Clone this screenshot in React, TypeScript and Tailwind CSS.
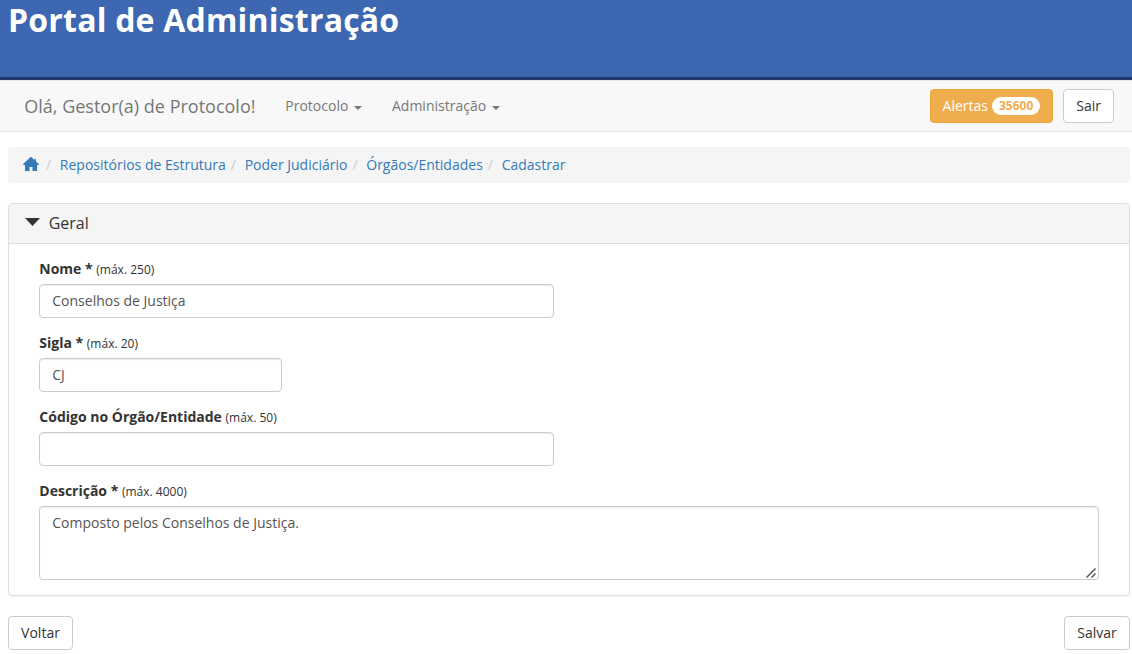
import React from "react";

const crumbs = ["Repositórios de Estrutura", "Poder Judiciário", "Órgãos/Entidades", "Cadastrar"];

const control =
  "block rounded border border-[#ccc] bg-white px-[12.3px] text-[14px] leading-5 text-[#555] outline-none shadow-[inset_0_1px_1px_rgba(0,0,0,0.075)]";
const input = "h-[34px] pt-[5px] pb-[7px]";
const button =
  "h-[34px] shrink-0 rounded border border-[#ccc] bg-white text-[14px] leading-5 text-[#333]";

function Caret() {
  return (
    <svg width="8" height="4" viewBox="0 0 8 4" className="mt-[3px] ml-[5.5px]" fill="currentColor">
      <path d="M0 0h8L4 4z" />
    </svg>
  );
}

function Label({ text, max }: { text: string; max: number }) {
  return (
    <label className="mb-[5px] block h-5 pl-[0.3px] text-[14px] leading-5 whitespace-nowrap">
      <span className="font-bold">{text}</span> <span className="text-[12px]">(máx. {max})</span>
    </label>
  );
}

export default function App() {
  return (
    <div className="h-[654px] w-full overflow-hidden bg-white font-['Open_Sans','Noto_Sans',sans-serif] text-[14px] leading-5 text-[#333]">
      <header className="h-20 border-b-[3px] border-[#20386d] bg-[#3d67b1] pl-2">
        <h1 className="text-[32px] leading-[40px] font-bold tracking-[0.2px] text-white">Portal de Administração</h1>
      </header>
      <nav className="flex h-[52px] items-center border-y border-[#e7e7e7] bg-[#f8f8f8] pr-[18px] pl-[24.3px] text-[#777]">
        <span className="w-[261px] text-[18px] whitespace-nowrap">Olá, Gestor(a) de Protocolo!</span>
        <a className="flex w-[106.7px] items-center whitespace-nowrap">Protocolo<Caret /></a>
        <a className="flex items-center whitespace-nowrap">Administração<Caret /></a>
        <button className="ml-auto flex h-[34px] items-center rounded border border-[#eea236] bg-[#f0ad4e] px-3 text-white">
          Alertas
          <span className="ml-1 flex h-[18px] items-center rounded-[10px] bg-white px-[7px] text-[12px] font-bold text-[#f0ad4e]">35600</span>
        </button>
        <button className={`${button} ml-2.5 px-3`}>Sair</button>
      </nav>
      <main className="pt-[15px] pr-[2px] pl-2">
        <ol className="flex h-9 items-center rounded bg-[#f5f5f5] pl-[15px] whitespace-nowrap text-[#337ab7]">
          <li className="mr-[2px] flex items-center">
            <svg width="16" height="14" viewBox="0 0 16 14" fill="currentColor" className="-mt-[2px]">
              <path d="M7.5 0h.8L11.5 3V2H13v2.4l2.8 2.7V8H14v6H9.5v-4h-3v4H2V8H.2v-.9z" />
            </svg>
          </li>
          {crumbs.map((crumb) => (
            <li key={crumb}>
              <span className="pr-[8.7px] pl-[5px] text-[#ccc]">/</span>
              <a>{crumb}</a>
            </li>
          ))}
        </ol>
        <section className="mt-5 h-[393px] rounded border border-[#ddd] shadow-[0_1px_1px_rgba(0,0,0,0.05)]">
          <h2 className="flex h-10 items-center rounded-t-[3px] border-b border-[#ddd] bg-[#f5f5f5] pb-[2px] pl-4 text-[16px]">
            <svg width="15" height="8" viewBox="0 0 15 8" fill="currentColor" className="mr-[8.7px] mb-px">
              <path d="M0 0h15L7.5 8z" />
            </svg>
            Geral
          </h2>
          <form className="flex flex-col gap-[15px] px-[30px] pt-[15px]">
            <div><Label text="Nome *" max={250} /><input className={`${control} ${input} w-[515px]`} defaultValue="Conselhos de Justiça" /></div>
            <div><Label text="Sigla *" max={20} /><input className={`${control} ${input} w-[243px]`} defaultValue="CJ" /></div>
            <div><Label text="Código no Órgão/Entidade" max={50} /><input className={`${control} ${input} w-[515px]`} /></div>
            <div>
              <Label text="Descrição *" max={4000} />
              <div className="relative">
                <textarea className={`${control} h-[74px] w-full resize-none py-1.5`} defaultValue="Composto pelos Conselhos de Justiça." />
                <svg width="10" height="10" viewBox="0 0 10 10" className="absolute right-[3px] bottom-[2px]" fill="none" stroke="#555" strokeWidth="1.5">
                  <path d="M.5 9.5 9.5.5M5.5 9.5l4-4" />
                </svg>
              </div>
            </div>
          </form>
        </section>
        <div className="mt-5 flex justify-between">
          <button className={`${button} w-[65px]`}>Voltar</button>
          <button className={`${button} w-[66px]`}>Salvar</button>
        </div>
      </main>
    </div>
  );
}
